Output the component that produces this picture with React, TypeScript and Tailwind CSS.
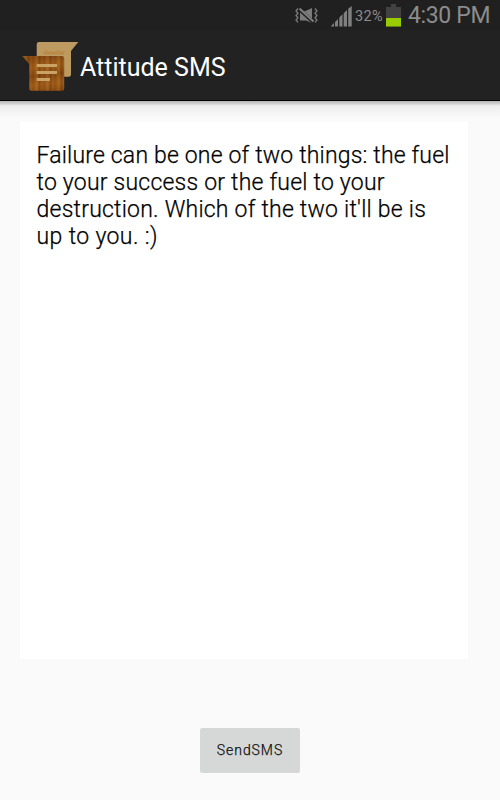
const LINES = [
  { text: 'Failure can be one of two things: the fuel', tracking: 'tracking-[0.18px]' },
  { text: 'to your success or the fuel to your', tracking: 'tracking-[0.22px]' },
  { text: "destruction. Which of the two it'll be is", tracking: 'tracking-[0.23px]' },
  { text: 'up to you. :)', tracking: 'tracking-[0.38px]' },
];

function VibrateIcon() {
  return (
    <svg className="ml-[295px] mt-[7px] shrink-0" width="23" height="17" viewBox="0 0 23 17" fill="none">
      <path d="M5 4h5.5L17 1v15l-6-2.5H5z" fill="#7b7b7b" />
      <path d="M3.5 1.5l15 14" stroke="#202020" strokeWidth="3.6" />
      <path d="M4.5 1.5l14 13" stroke="#7f7f7f" strokeWidth="2" />
      <path d="M3 1.5L1 4l2 2.2L1 8.5l2 2.3-2 2.2 2 2.4M20 1.5L22 4l-2 2.2 2 2.3-2 2.3 2 2.2-2 2.4" stroke="#7b7b7b" strokeWidth="1.3" />
    </svg>
  );
}

function SignalIcon() {
  return (
    <svg className="ml-[13px] mt-[6px] shrink-0" width="21" height="21" viewBox="0 0 21 21" fill="#808080">
      <path d="M0 20.5V20l3-3v3.5zM4 20.5V16l3-3v7.5zM8.3 20.5v-9l3.2-3.2v12.2zM12.7 20.5V7.2L16 3.9v16.6zM17.2 20.5V2.7L20.7 0v20.5z" />
    </svg>
  );
}

function BatteryIcon() {
  return (
    <svg className="mt-[4px] shrink-0" width="15" height="23" viewBox="0 0 15 23">
      <path d="M5 0h5v3h5v19.5H0V3h5z" fill="#424242" />
      <path d="M0 14h15v8.5H0z" fill="#99cc00" />
    </svg>
  );
}

function AppIcon() {
  return (
    <svg className="ml-[22px] shrink-0" width="57" height="51" viewBox="0 0 57 51">
      <defs>
        <linearGradient id="wood" x1="0" x2="11" y1="0" y2="0" gradientUnits="userSpaceOnUse" spreadMethod="repeat">
          <stop offset="0" stopColor="#8a4a12" />
          <stop offset="0.35" stopColor="#a8671f" />
          <stop offset="0.6" stopColor="#7d4210" />
          <stop offset="0.8" stopColor="#9c5a18" />
          <stop offset="1" stopColor="#8a4a12" />
        </linearGradient>
        <linearGradient id="bands" x1="0" x2="1" y1="0" y2="9" gradientUnits="userSpaceOnUse" spreadMethod="reflect">
          <stop offset="0" stopColor="#5c2c08" stopOpacity="0.28" />
          <stop offset="1" stopColor="#c07a28" stopOpacity="0.2" />
        </linearGradient>
      </defs>
      <path d="M17 1h39.3l-7.3 9v23.5a2.3 2.3 0 0 1-2.3 2.3H17a2.3 2.3 0 0 1-2.3-2.3V3.3A2.3 2.3 0 0 1 17 1z" fill="#bc9a60" />
      <path d="M21.5 11.5l3-1.2 2 1.2 3-.8 3 .8 3-1.2 3 1.2 4-.8M22 12.7h20" stroke="#b88338" strokeWidth="1" fill="none" />
      <path d="M0.3 15h39.4a2.5 2.5 0 0 1 2.5 2.5v29.8a2.5 2.5 0 0 1-2.5 2.5H9.7a2.5 2.5 0 0 1-2.5-2.5V23z" fill="url(#wood)" />
      <path d="M0.3 15h39.4a2.5 2.5 0 0 1 2.5 2.5v29.8a2.5 2.5 0 0 1-2.5 2.5H9.7a2.5 2.5 0 0 1-2.5-2.5V23z" fill="url(#bands)" />
      <path d="M14.7 23H35v3.1H14.7zM14.7 30H35v3.1H14.7zM14.7 37H28v3.1H14.7z" fill="#c9a265" />
    </svg>
  );
}

export default function App() {
  return (
    <div className="flex h-[800px] w-[500px] flex-col overflow-hidden bg-[#fafafa] font-['Roboto',sans-serif]">
      {/* Status bar */}
      <div className="flex h-[30px] shrink-0 items-start bg-[#202020] text-[#8c8c8c]">
        <VibrateIcon />
        <SignalIcon />
        <span className="ml-[3px] w-[31px] shrink-0 text-[14.5px] leading-[33px] tracking-[0.3px]">32%</span>
        <BatteryIcon />
        <span className="ml-[7px] whitespace-nowrap text-[23px] leading-[32px] tracking-[-0.35px]">4:30 PM</span>
      </div>

      {/* Action bar */}
      <div className="flex h-[71px] shrink-0 items-start border-b border-black bg-[#222222] pt-[11px]">
        <AppIcon />
        <h1 className="ml-px whitespace-nowrap text-[25px] leading-[54px] text-white">Attitude SMS</h1>
      </div>
      <div className="h-[17px] shrink-0 bg-linear-to-b from-[#b4b2b3] via-[#eeeeee] via-30% to-[#fafafa]" />

      {/* Message */}
      <div className="ml-5 mt-[4px] h-[537px] w-[448px] shrink-0 bg-white pl-[16.5px] pt-[20px]">
        {LINES.map(({ text, tracking }) => (
          <p key={text} className={`whitespace-nowrap text-[23px] font-light leading-[27px] text-black [-webkit-text-stroke:0.25px_#000] ${tracking}`}>
            {text}
          </p>
        ))}
      </div>

      <button className="mx-auto mt-[68.5px] h-[45px] w-[100px] shrink-0 rounded-[2px] bg-[#d6d7d7] pt-px text-[14px] font-light tracking-[0.95px] text-[#111111] [-webkit-text-stroke:0.25px_#111]">
        SendSMS
      </button>
    </div>
  );
}
